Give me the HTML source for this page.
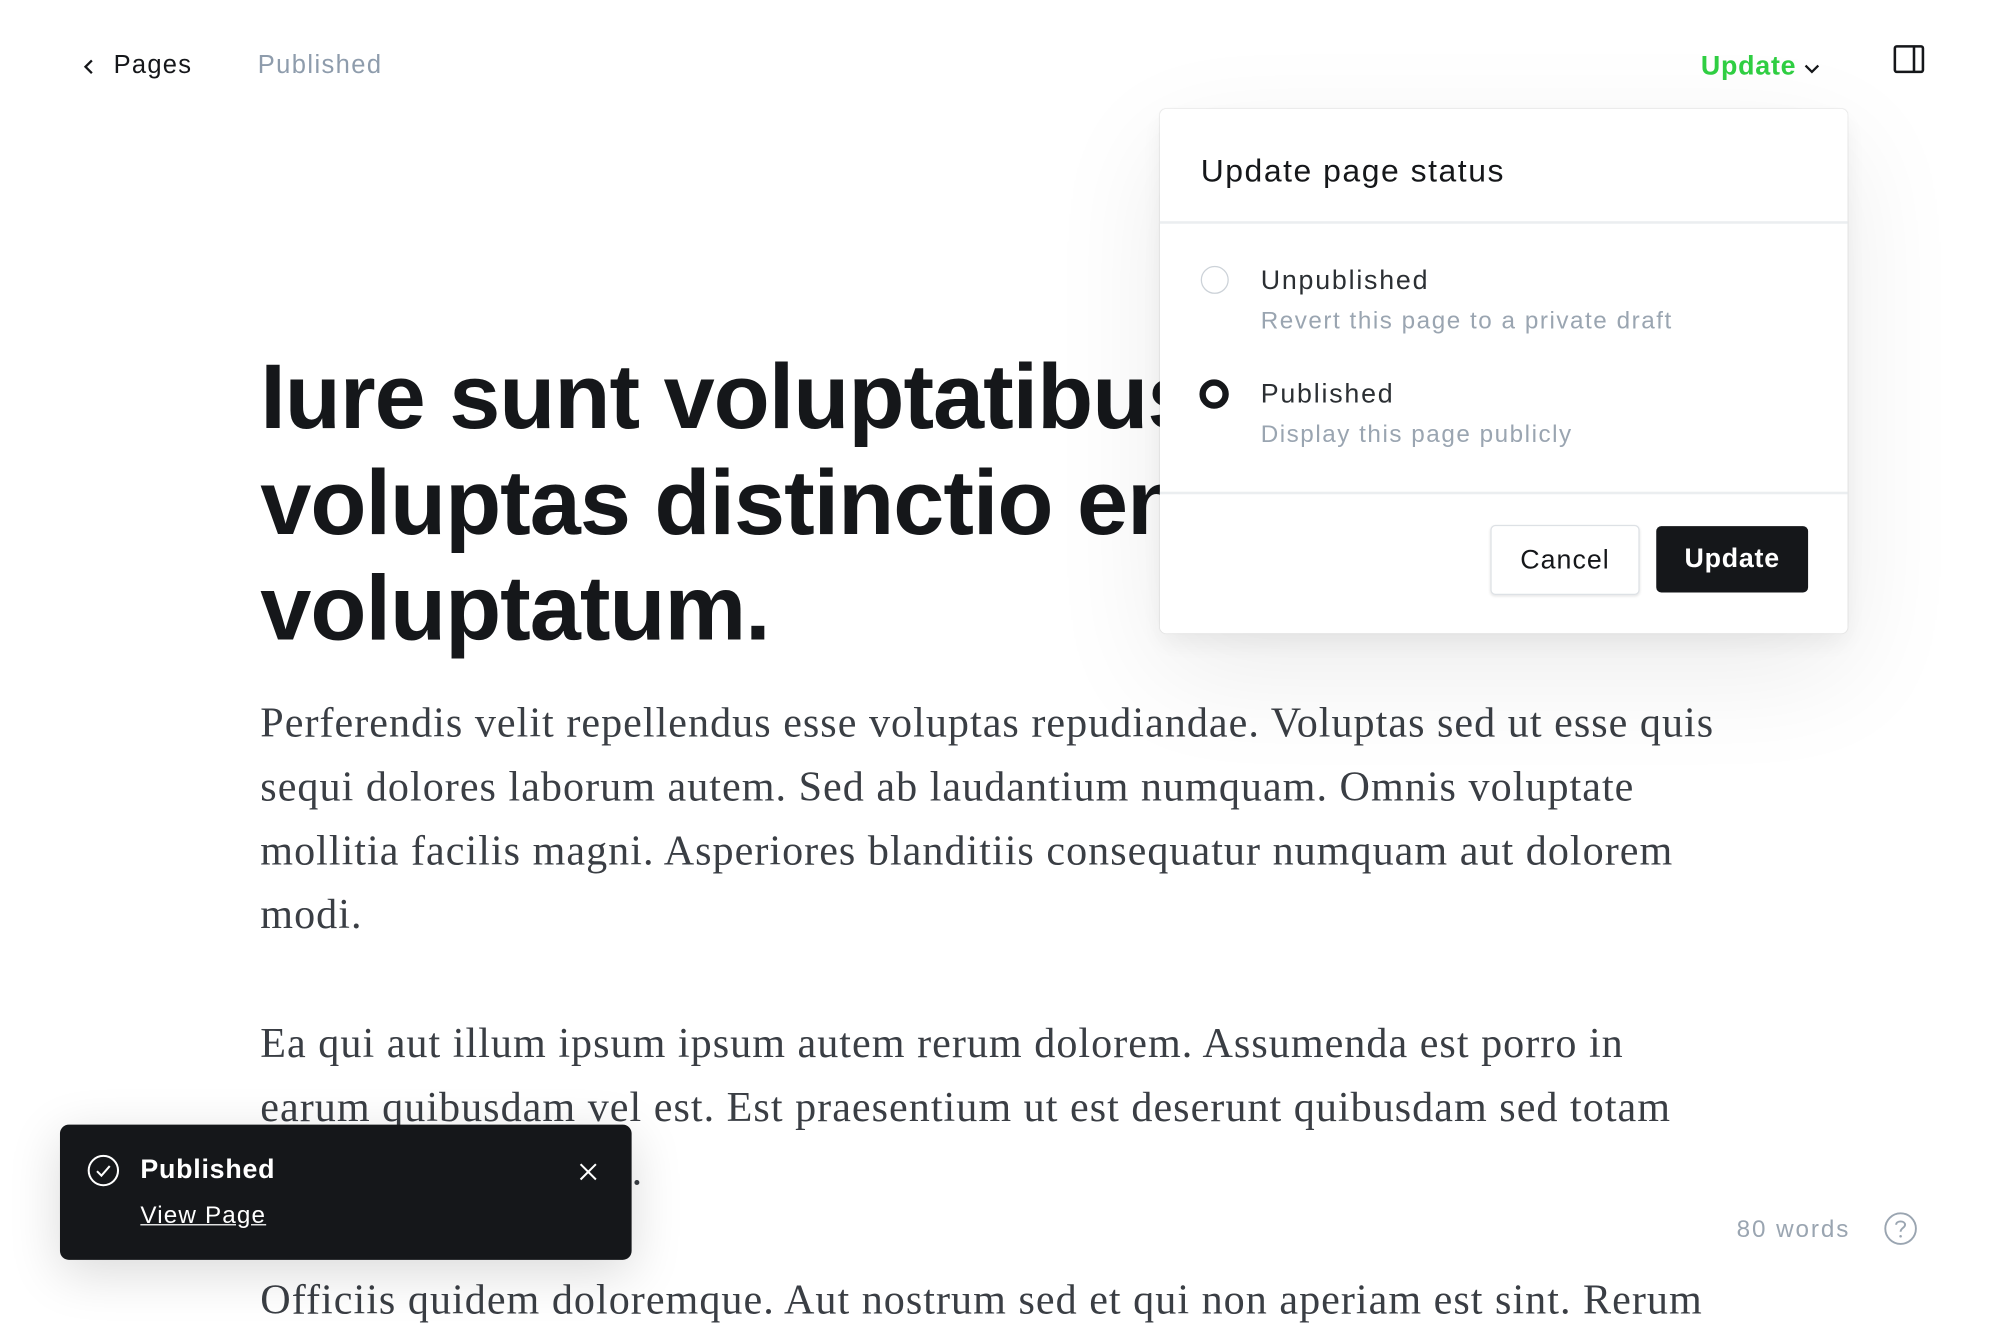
<!DOCTYPE html>
<html><head><meta charset="utf-8"><style>
html,body{margin:0;padding:0;background:#fff;overflow:hidden;width:2000px;height:1320px}
#s{position:absolute;left:0;top:2.5px;width:1568px;height:1035px;transform:scale(1.276);transform-origin:0 0;font-family:"Liberation Sans",sans-serif;color:#15171a}
.a{position:absolute;white-space:nowrap}
.h{font-weight:bold;font-size:72px;letter-spacing:-0.8px;line-height:83px}
.p{font-family:"Liberation Serif",serif;font-size:33px;letter-spacing:0.8px;color:#3a3e44;line-height:50px}
</style></head><body><div id="s">
<svg class="a" style="left:62px;top:42px" width="14" height="16" viewBox="0 0 14 16"><path d="M10 3 L5 8 L10 13" fill="none" stroke="#15171a" stroke-width="1.8"/></svg>
<div class="a" style="left:89px;top:38px;font-size:20px;letter-spacing:1px">Pages</div>
<div class="a" style="left:202px;top:38px;font-size:20px;letter-spacing:1.1px;color:#8e9cac">Published</div>
<div class="a" style="left:1333px;top:38px;font-size:21px;letter-spacing:0.6px;font-weight:bold;color:#30cf43">Update</div>
<svg class="a" style="left:1413px;top:46px" width="14" height="12" viewBox="0 0 14 12"><path d="M2 3 L7 8 L12 3" fill="none" stroke="#15171a" stroke-width="1.8"/></svg>
<svg class="a" style="left:1483px;top:31px" width="26" height="26" viewBox="0 0 26 26"><rect x="2" y="3" width="22" height="20" rx="1.5" fill="none" stroke="#15171a" stroke-width="2"/><line x1="17" y1="3" x2="17" y2="23" stroke="#15171a" stroke-width="2"/></svg>

<div class="a h" style="left:204px;top:268px">Iure sunt voluptatibus<br>voluptas distinctio enim<br>voluptatum.</div>
<div class="a p" style="left:204px;top:540px">Perferendis velit repellendus esse voluptas repudiandae. Voluptas sed ut esse quis<br>sequi dolores laborum autem. Sed ab laudantium numquam. Omnis voluptate<br>mollitia facilis magni. Asperiores blanditiis consequatur numquam aut dolorem<br>modi.</div>
<div class="a p" style="left:204px;top:791px">Ea qui aut illum ipsum ipsum autem rerum dolorem. Assumenda est porro in<br>earum quibusdam vel est. Est praesentium ut est deserunt quibusdam sed totam<br>et dolorem in sit vo</div>
<div class="a p" style="left:495px;top:891px">.</div>
<div class="a p" style="left:204px;top:992px">Officiis quidem doloremque. Aut nostrum sed et qui non aperiam est sint. Rerum</div>

<div class="a" style="left:909px;top:83px;width:539px;height:411px;background:#fff;border-radius:5px;box-shadow:0 0 1px rgba(0,0,0,.15),0 8px 20px rgba(0,0,0,.06),0 30px 90px rgba(0,0,0,.08)">
<div class="a" style="left:32px;top:35px;font-size:25px;letter-spacing:1.2px">Update page status</div>
<div class="a" style="left:0;top:88px;width:539px;height:2px;background:#ebeef0"></div>
<div class="a" style="left:32px;top:123px;width:20px;height:20px;border:1.5px solid #ccd2d8;border-radius:50%"></div>
<div class="a" style="left:79px;top:123px;font-size:21px;letter-spacing:1.4px;color:#2b2f33">Unpublished</div>
<div class="a" style="left:79px;top:156px;font-size:19px;letter-spacing:1.2px;color:#9aa5b1">Revert this page to a private draft</div>
<div class="a" style="left:31px;top:212px;width:13px;height:13px;border:5.5px solid #15171a;border-radius:50%"></div>
<div class="a" style="left:79px;top:212px;font-size:21px;letter-spacing:1.4px;color:#2b2f33">Published</div>
<div class="a" style="left:79px;top:245px;font-size:19px;letter-spacing:1.2px;color:#9aa5b1">Display this page publicly</div>
<div class="a" style="left:0;top:300px;width:539px;height:2px;background:#ebeef0"></div>
<div class="a" style="left:259px;top:326px;width:115px;height:53px;border:1px solid #dde1e5;border-radius:4px;box-shadow:0 1px 2px rgba(0,0,0,.1);font-size:21px;letter-spacing:0.8px;line-height:53px;text-align:center;color:#15171a">Cancel</div>
<div class="a" style="left:389px;top:327px;width:119px;height:52px;background:#15171a;border-radius:4px;font-size:21px;letter-spacing:0.6px;font-weight:bold;line-height:52px;text-align:center;color:#fff">Update</div>
</div>

<div class="a" style="left:47px;top:879px;width:448px;height:106px;background:#15171a;border-radius:7px;box-shadow:0 10px 40px rgba(0,0,0,.15)">
<svg class="a" style="left:21px;top:23px" width="26" height="26" viewBox="0 0 26 26"><circle cx="13" cy="13" r="11.5" fill="none" stroke="#fff" stroke-width="1.6"/><path d="M8 13.5 L11.5 17 L18 9.5" fill="none" stroke="#fff" stroke-width="1.6"/></svg>
<div class="a" style="left:63px;top:24px;font-size:21px;letter-spacing:0.6px;font-weight:bold;color:#fff">Published</div>
<div class="a" style="left:63px;top:61px;font-size:19px;letter-spacing:0.9px;color:#fff;text-decoration:underline">View Page</div>
<svg class="a" style="left:406px;top:29px" width="16" height="16" viewBox="0 0 16 16"><path d="M2 2 L14 14 M14 2 L2 14" stroke="#fff" stroke-width="1.6"/></svg>
</div>

<div class="a" style="left:1361px;top:951px;font-size:19px;letter-spacing:1.5px;color:#9aa5b1">80 words</div>
<svg class="a" style="left:1476px;top:947px" width="27" height="27" viewBox="0 0 27 27"><circle cx="13.5" cy="13.5" r="12" fill="none" stroke="#9aa5b1" stroke-width="1.5"/><path d="M10 10.5 C10 7 17 7 17 10.5 C17 13 13.5 13 13.5 16" fill="none" stroke="#9aa5b1" stroke-width="1.5"/><circle cx="13.5" cy="19.5" r="1" fill="#9aa5b1"/></svg>
</div></body></html>
